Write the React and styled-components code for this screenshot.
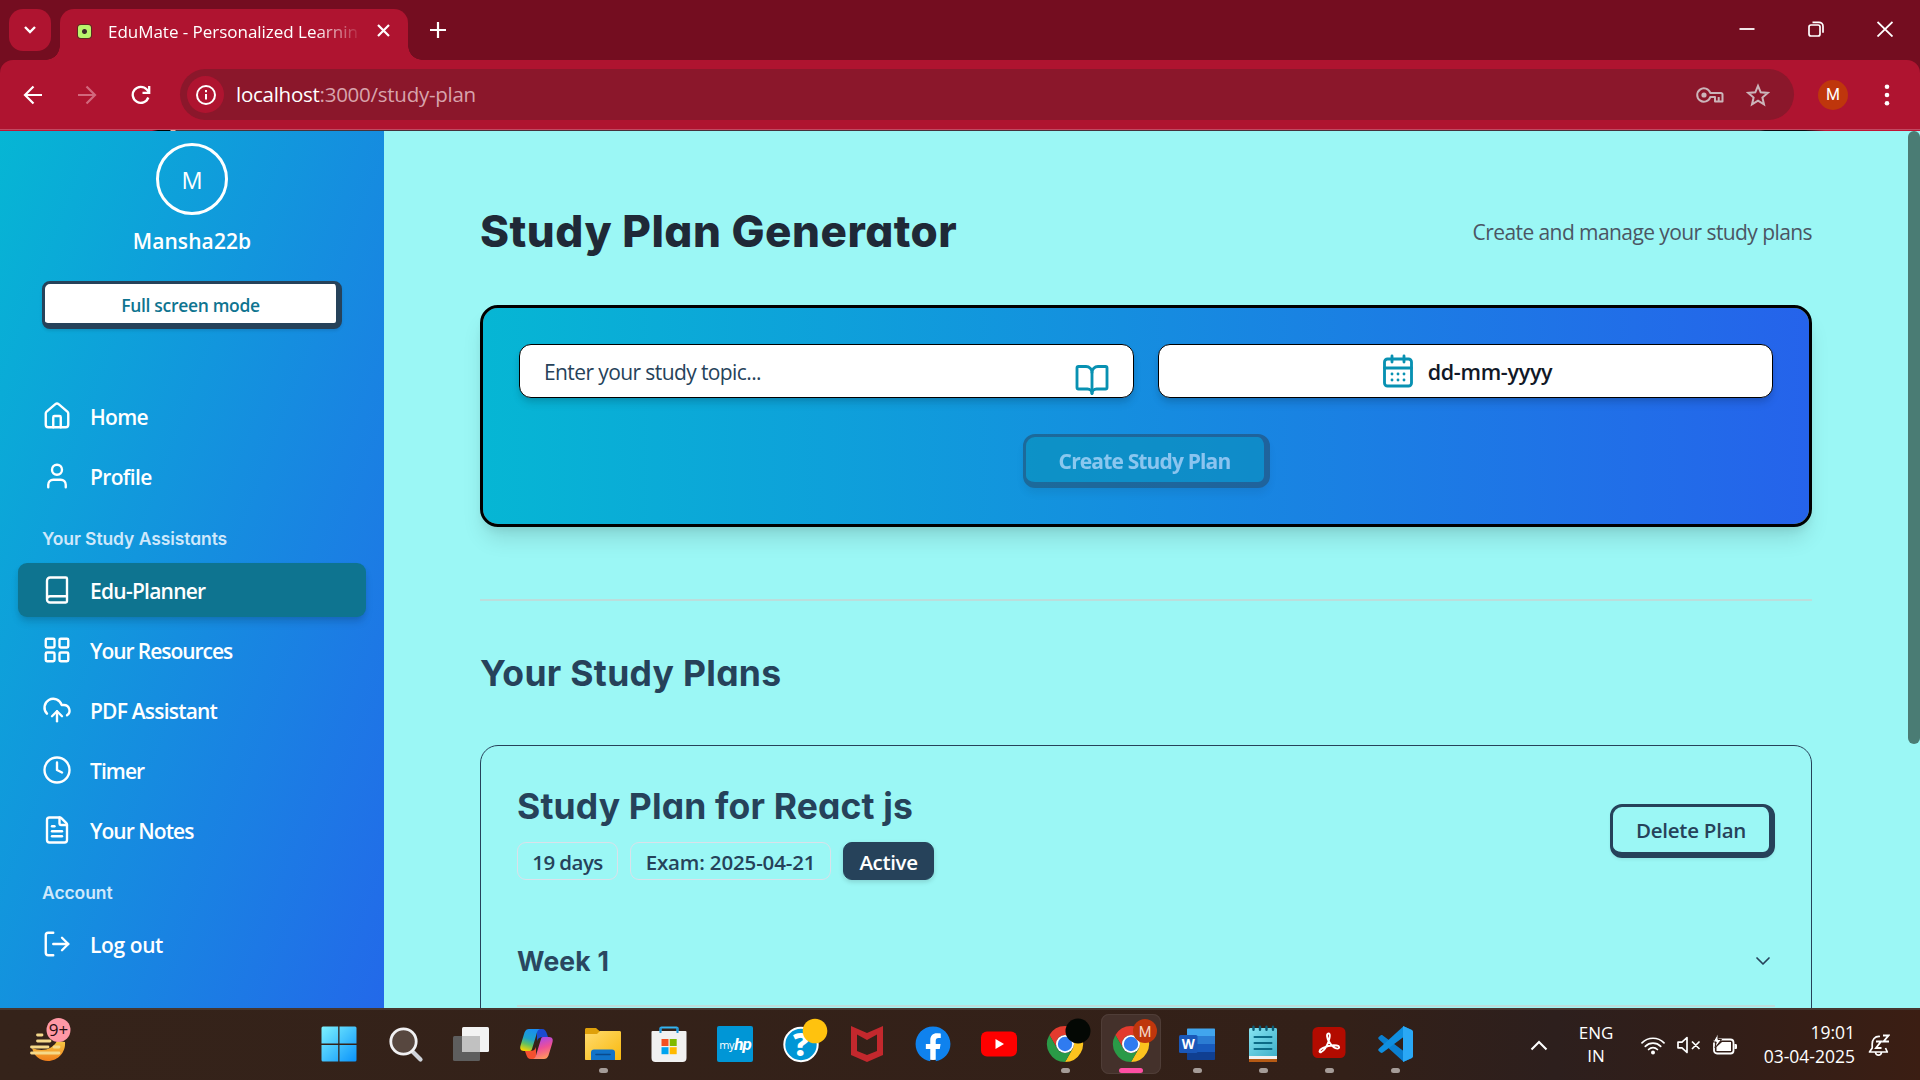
import React from "react";
import styled, { createGlobalStyle, css } from "styled-components";
import {
  House, User, Book, LayoutGrid, CloudUpload, Clock, FileText, LogOut,
  BookOpen, CalendarDays, ChevronDown,
} from "lucide-react";
import { FaFacebook } from "react-icons/fa";

const ui = `"Open Sans", "Noto Sans", sans-serif`;
const display = `Inter, "Open Sans", sans-serif`;
const navy = "#26425a";
const aqua = "#9bf7f5";

const GlobalStyle = createGlobalStyle`
  * { box-sizing: border-box; }
  body { margin: 0; font-family: ${ui}; background: ${aqua}; overflow: hidden; }
  svg { display: block; flex: none; }
  button { font-family: inherit; margin: 0; cursor: pointer; }
  h1, h2, h3, p { margin: 0; }
`;

const Screen = styled.div`
  width: 1920px;
  height: 1080px;
  display: grid;
  grid-template-rows: 60px 71px 877px 72px;
  overflow: hidden;
`;

/* ---------- Browser window ---------- */

const TabStrip = styled.header`
  display: flex;
  align-items: flex-start;
  padding: 9px 27px 0 9px;
  background: #740d20;
  color: #fff;
`;

const TabSearch = styled.button`
  width: 42px;
  height: 42px;
  display: grid;
  place-items: center;
  border: 0;
  border-radius: 14px;
  background: #af1430;
  padding: 0;
`;

const Tab = styled.div`
  position: relative;
  width: 348px;
  height: 51px;
  margin-left: 9px;
  padding: 0 18px 9px 17px;
  display: flex;
  align-items: center;
  border-radius: 14px 14px 0 0;
  background: #af1430;
  &::before, &::after {
    content: "";
    position: absolute;
    bottom: 0;
    width: 14px;
    height: 14px;
  }
  &::before {
    left: -14px;
    background: radial-gradient(circle at 0 0, transparent 13.5px, #af1430 14px);
  }
  &::after {
    right: -14px;
    background: radial-gradient(circle at 100% 0, transparent 13.5px, #af1430 14px);
  }
`;

const Favicon = styled.span`
  width: 13px;
  height: 13px;
  margin: 3px 17px 0 1px;
  border-radius: 3px;
  background: radial-gradient(circle, #3b2a2a 2px, #b9f56c 3px);
  box-shadow: 0 0 0 1px #5c2a20;
`;

const TabTitle = styled.span`
  width: 252px;
  padding-top: 3px;
  font-size: 17px;
  letter-spacing: -0.03px;
  white-space: nowrap;
  overflow: hidden;
  mask-image: linear-gradient(90deg, #000 82%, transparent 101%);
`;

const TabClose = styled.span`
  margin-left: auto;
`;

const NewTab = styled.span`
  margin: 12px 0 0 21px;
`;

const WindowControls = styled.div`
  display: flex;
  gap: 53px;
  margin: 12px 0 0 auto;
`;

const Toolbar = styled.div`
  position: relative;
  display: flex;
  align-items: center;
  padding: 0 26px 2px 23px;
  background: #af1430;
  border-radius: 13px 13px 0 0;
  &::after {
    content: "";
    position: absolute;
    inset: auto 0 0 0;
    height: 2px;
    background:
      linear-gradient(#c04a62, #c04a62) top / 100% 1px no-repeat,
      linear-gradient(90deg, #c01535 0 152px, #000 158px 170px, #f0b0a0 171px 175px, #45323c 176px 1760px, #0b0b12 1765px 1805px, #c01535 1825px) bottom / 100% 1px no-repeat;
  }
`;

const ChromeTop = styled.div`
  background: #740d20;
  display: grid;
`;

const NavButtons = styled.div`
  display: flex;
  gap: 34px;
`;

const AddressBar = styled.div`
  width: 1614px;
  height: 51px;
  margin-left: 29px;
  padding: 0 24px 0 7px;
  display: flex;
  align-items: center;
  border-radius: 26px;
  background: #8b172b;
`;

const SiteInfo = styled.span`
  width: 37px;
  height: 37px;
  display: grid;
  place-items: center;
  border-radius: 50%;
  background: #af1430;
`;

const Url = styled.span`
  margin: 0 0 2px 12px;
  font-size: 20.5px;
  letter-spacing: -0.26px;
  color: #d8a3ac;
  b { font-weight: 400; color: #fff; }
`;

const AddressActions = styled.span`
  display: flex;
  align-items: center;
  gap: 21px;
  margin-left: auto;
`;

const ProfileBadge = styled.span`
  width: 30px;
  height: 30px;
  margin-left: 24px;
  display: grid;
  place-items: center;
  border-radius: 50%;
  background: #bf360c;
  color: #fff;
  font: 400 16px/30px Roboto, sans-serif;
`;

const MenuDots = styled.span`
  margin-left: auto;
`;

/* ---------- Page ---------- */

const Page = styled.div`
  display: grid;
  grid-template-columns: 384px 1fr 12px;
  background: ${aqua};
  overflow: hidden;
`;

const Sidebar = styled.aside`
  display: flex;
  flex-direction: column;
  padding: 12px 18px 0;
  background: linear-gradient(to bottom right, #06b6d4, #2563eb);
  color: #fff;
`;

const Avatar = styled.div`
  width: 72px;
  height: 72px;
  align-self: center;
  display: grid;
  place-items: center;
  padding-top: 1px;
  border: 3px solid #fff;
  border-radius: 50%;
  font-size: 23.5px;
`;

const UserName = styled.p`
  margin-top: 12px;
  text-align: center;
  font-size: 21px;
  font-weight: 600;
  line-height: 28px;
  letter-spacing: 0.1px;
`;

const raised = css`
  border: 3px solid ${navy};
  border-right-width: 6px;
  border-bottom-width: 6px;
`;

const FullScreenButton = styled.button`
  ${raised}
  height: 48px;
  margin: 26px 24px 60px;
  padding: 2px 0 0;
  border-radius: 8px;
  background: #fff;
  color: #0e7490;
  font-size: 17.5px;
  font-weight: 600;
  letter-spacing: -0.32px;
  box-shadow: 0 2px 3px rgba(0, 0, 0, 0.1);
`;

const NavList = styled.nav`
  display: flex;
  flex-direction: column;
`;

const NavItem = styled.a`
  height: 54px;
  padding-left: 24px;
  display: flex;
  align-items: center;
  gap: 18px;
  border-radius: 9px;
  & + & { margin-top: 6px; }
  ${(p) => p.$active && css`
    background: #0e7490;
    box-shadow: 0 6px 9px -1px rgba(0, 0, 0, 0.12), 0 3px 6px -2px rgba(0, 0, 0, 0.1);
  `}
`;

const NavLabel = styled.span`
  padding-top: 2px;
  font-size: 21px;
  font-weight: 640;
  letter-spacing: ${(p) => p.$track}px;
  white-space: nowrap;
`;

const NavHeading = styled.h3`
  height: 60px;
  padding: 11px 0 0 24px;
  display: flex;
  align-items: center;
  font: 600 17.5px ${display};
  font-feature-settings: "cv11";
  letter-spacing: -0.08px;
  color: #cfe8fb;
`;

const Main = styled.main`
  padding: 70px 96px 0;
  min-width: 0;
`;

const Heading = styled.h1`
  font: 780 44px/60px ${display};
  font-feature-settings: "cv11";
  letter-spacing: 0.5px;
  color: #1f2937;
`;

const PageHeader = styled.div`
  display: flex;
  align-items: center;
  justify-content: space-between;
`;

const Tagline = styled.p`
  padding-top: 2px;
  font-size: 21px;
  letter-spacing: -0.58px;
  color: #4b5563;
`;

const Generator = styled.section`
  height: 222px;
  margin-top: 44px;
  padding: 36px;
  display: grid;
  grid-template-columns: 1fr 1fr;
  grid-template-rows: 54px 54px;
  gap: 36px 24px;
  border: 3px solid #000;
  border-radius: 18px;
  background: linear-gradient(to right, #06b6d4, #2563eb) padding-box;
  box-shadow: 0 15px 22px -4px rgba(0, 0, 0, 0.12), 0 6px 9px -3px rgba(0, 0, 0, 0.08);
`;

const Field = styled.div`
  display: flex;
  align-items: center;
  justify-content: ${(p) => (p.$centered ? "center" : "space-between")};
  gap: 12px;
  padding: 0 23px 0 24px;
  border: 1px solid #000;
  border-radius: 12px;
  background: #fff;
  color: #0891b2;
  box-shadow: 0 6px 9px -1px rgba(0, 0, 0, 0.12), 0 3px 6px -2px rgba(0, 0, 0, 0.1);
`;

const Placeholder = styled.span`
  padding-top: 2px;
  font-size: 21px;
  letter-spacing: -0.6px;
  color: ${navy};
`;

const DateText = styled.span`
  padding-top: 1px;
  font-size: 21.5px;
  font-weight: 570;
  letter-spacing: -0.3px;
  color: #111827;
`;

const BookSlot = styled.span`
  margin-top: 18px;
`;

const CreateButton = styled.button`
  ${raised}
  grid-column: 1 / -1;
  justify-self: center;
  width: 247px;
  padding: 2px 0 0;
  border-radius: 12px;
  background: #0891b2;
  color: #fff;
  font-size: 21px;
  font-weight: 680;
  letter-spacing: -0.85px;
  opacity: 0.5;
  box-shadow: 0 6px 9px -1px rgba(0, 0, 0, 0.14);
`;

const Rule = styled.div`
  height: 2px;
  margin: 72px 0 48px;
  background: #bcdedc;
`;

const SubHeading = styled.h2`
  padding-top: 2px;
  font: 700 35.5px/46px ${display};
  font-feature-settings: "cv11";
  letter-spacing: ${(p) => p.$track}px;
  color: ${navy};
`;

const PlanCard = styled.section`
  height: 400px;
  margin-top: 48px;
  padding: 36px;
  border: 1px solid ${navy};
  border-radius: 18px;
`;

const PlanHeader = styled.div`
  display: flex;
  align-items: center;
  justify-content: space-between;
`;

const Badges = styled.div`
  display: flex;
  gap: 12px;
  margin-top: 12px;
`;

const Badge = styled.span`
  width: ${(p) => p.$width}px;
  height: 38px;
  padding-top: 2px;
  display: grid;
  place-items: center;
  border: 1px solid #dbe1ea;
  border-radius: 9px;
  font-size: 20.5px;
  font-weight: 570;
  letter-spacing: ${(p) => p.$track}px;
  color: ${navy};
  white-space: nowrap;
  ${(p) => p.$solid && css`
    background: ${navy};
    border-color: ${navy};
    color: #fff;
    font-weight: 640;
    box-shadow: 0 2px 5px rgba(0, 0, 0, 0.15);
  `}
`;

const DeleteButton = styled.button`
  ${raised}
  width: 165px;
  height: 54px;
  padding: 1px 0 0;
  border-radius: 12px;
  background: transparent;
  color: ${navy};
  font-size: 20.5px;
  font-weight: 570;
  letter-spacing: -0.25px;
  box-shadow: 0 2px 3px rgba(0, 0, 0, 0.06);
`;

const WeekRow = styled.div`
  height: 91px;
  margin-top: 36px;
  display: flex;
  align-items: center;
  justify-content: space-between;
  border-bottom: 2px solid #bcdedc;
  color: ${navy};
`;

const WeekTitle = styled.h3`
  font: 660 26.5px ${display};
  font-feature-settings: "cv11";
  letter-spacing: 0.2px;
  color: #2a4760;
`;

const ScrollThumb = styled.div`
  height: 613px;
  border-radius: 6px;
  background: #4a7c74;
`;

/* ---------- Taskbar ---------- */

const Taskbar = styled.footer`
  display: grid;
  grid-template-columns: 306px auto 1fr;
  border-top: 2px solid #46362f;
  background: linear-gradient(90deg, #35231a, #332018 70%, #2d1f1d 81%, #321e18 90%, #3b1e13);
  color: #fff;
`;

const Widgets = styled.div`
  padding: 8px 0 0 30px;
`;

const Apps = styled.div`
  display: grid;
  grid-auto-flow: column;
  grid-auto-columns: 66px;
`;

const AppCell = styled.div`
  width: 60px;
  height: 60px;
  margin: 4px 0 0 3px;
  display: grid;
  justify-items: center;
  grid-template-rows: 54px 6px;
  border-radius: 8px;
  ${(p) => p.$current && css`
    background: #44312b;
    box-shadow: inset 0 0 0 1px #4f3d37;
  `}
`;

const AppIcon = styled.div`
  width: 36px;
  height: 36px;
  margin-top: 12px;
  svg { overflow: visible; }
`;

const RunMark = styled.i`
  width: ${(p) => (p.$current ? 24 : 9)}px;
  height: 5px;
  border-radius: 3px;
  background: ${(p) => (p.$current ? "#ff4fa3" : "#a59c98")};
`;

const MyHp = styled.div`
  width: 36px;
  height: 36px;
  padding-top: 2px;
  display: flex;
  align-items: center;
  justify-content: center;
  border-radius: 2px;
  background: #0096d6;
  font: 400 11px/34px ${ui};
  letter-spacing: -0.4px;
  em { font: italic 700 17px/30px Roboto, sans-serif; letter-spacing: -1px; margin-top: -3px; }
`;

const Tray = styled.div`
  display: flex;
  align-items: center;
  justify-content: flex-end;
  padding-right: 30px;
`;

const Language = styled.div`
  width: 40px;
  margin: -2px 25px 0 28px;
  text-align: center;
  font-size: 17px;
  line-height: 23px;
`;

const StatusIcons = styled.div`
  display: flex;
  align-items: center;
  gap: 12px;
`;

const DateTime = styled.div`
  width: 96px;
  margin: -2px 13px 0 21px;
  text-align: right;
  font-size: 17.5px;
  line-height: 24px;
  white-space: nowrap;
`;

/* ---------- Drawn icons ---------- */

const Stroke = ({ w, h = w, sw = 2, color = "#fff", children, box }) => (
  <svg width={w} height={h} viewBox={box || `0 0 ${w} ${h}`} fill="none" stroke={color} strokeWidth={sw}>
    {children}
  </svg>
);

const WeatherIcon = () => (
  <svg width="44" height="46" viewBox="0 0 44 46">
    <defs>
      <linearGradient id="moon" x1="0" y1="0" x2="0" y2="1">
        <stop offset="0" stopColor="#f6c945" /><stop offset="1" stopColor="#f07f1b" />
      </linearGradient>
    </defs>
    <path d="M35 24c1 10-7 19-17 19-8 0-14-5-16-13 10 4 20 2 25-7z" fill="url(#moon)" />
    <g stroke="#f5d98a" strokeWidth="2.8" strokeLinecap="round">
      <path d="M7.500 17H12M7.500 23H20M1.500 29H18M24 29h5M1.500 35H29" />
    </g>
    <circle cx="28.500" cy="12" r="12" fill="#ff98a5" />
    <text x="28.500" y="18" textAnchor="middle" fontSize="17" fill="#2a0d10" fontFamily={ui}>9+</text>
  </svg>
);

const WindowsIcon = () => (
  <svg width="36" height="36" viewBox="0 0 36 36">
    <defs>
      <linearGradient id="win" x1="0" y1="0" x2="1" y2="1">
        <stop offset="0" stopColor="#7df3ff" /><stop offset="1" stopColor="#0a93fb" />
      </linearGradient>
    </defs>
    <path fill="url(#win)" d="M2 .5h15.200v17H.5V2A1.500 1.500 0 0 1 2 .5zM18.500.5H34A1.500 1.500 0 0 1 35.500 2v15.500h-17zM.5 19h16.700v16.500H2A1.500 1.500 0 0 1 .5 34zM18.500 19h17v15a1.500 1.500 0 0 1-1.500 1.500H18.500z" />
  </svg>
);

const SearchIcon = () => (
  <svg width="36" height="36" viewBox="0 0 36 36">
    <path d="M25 25l8.500 8.500" stroke="#cfd3da" strokeWidth="4.200" strokeLinecap="round" />
    <circle cx="16.500" cy="15.500" r="12.700" fill="#57473f" stroke="#f1f1f3" strokeWidth="2.800" />
  </svg>
);

const TaskViewIcon = () => (
  <svg width="36" height="36" viewBox="0 0 36 36">
    <rect x="9" y="1" width="27" height="25" rx="1.500" fill="#f3f3f3" />
    <rect x="0" y="10" width="27" height="25" rx="1.500" fill="#5e5e5e" />
    <path d="M9 10h18v16H9z" fill="#c1c1c1" />
  </svg>
);

const CopilotIcon = () => (
  <svg width="36" height="36" viewBox="-1 -2 36 36">
    <defs>
      <linearGradient id="cpA" x1="0.600" y1="0" x2="0.300" y2="1">
        <stop offset="0" stopColor="#1a8df2" /><stop offset=".45" stopColor="#1ea3c9" />
        <stop offset=".7" stopColor="#5fc064" /><stop offset="1" stopColor="#f6d400" />
      </linearGradient>
      <linearGradient id="cpB" x1="0.600" y1="1" x2="0.300" y2="0">
        <stop offset="0" stopColor="#ff9a5a" /><stop offset=".5" stopColor="#ee5096" />
        <stop offset="1" stopColor="#a346f0" />
      </linearGradient>
    </defs>
    <path d="M17 1h5c3 0 4 2 5 5l1 3h-5c-3 0-5 1-6 4z" fill="#1b4bd0" />
    <path d="M9 1h11c-3 1-3 4-4 7l-4 13c-.6 2-1.500 2-3 2H4c-4 0-4.500-3-3-7L4.500 4.500C5.500 2 7 1 9 1z" fill="url(#cpA)" />
    <path d="M16 31h-5c-3 0-4-2-5-5l-1-3h5c3 0 5-1 6-4z" fill="#f4502f" />
    <path d="M24 31H13c3-1 3-4 4-7l4-13c.6-2 1.500-2 3-2h5c4 0 4.500 3 3 7l-3.500 11.500C27.500 30 26 31 24 31z" fill="url(#cpB)" />
  </svg>
);

const FolderIcon = () => (
  <svg width="36" height="36" viewBox="0 0 36 36">
    <defs>
      <linearGradient id="fld" x1="0" y1="0" x2="1" y2="1">
        <stop offset="0" stopColor="#ffdb6e" /><stop offset="1" stopColor="#f9b90e" />
      </linearGradient>
    </defs>
    <path d="M0 3.500C0 2.500.8 2 1.500 2H11l4 3.500V10H0z" fill="#dfa00a" />
    <path d="M0 8h12l3-3h19.500c1 0 1.500.6 1.500 1.500V33c0 .6-.4 1-1 1H1c-.6 0-1-.4-1-1z" fill="url(#fld)" />
    <path d="M6 34v-7.500A3 3 0 0 1 9 23.500h18a3 3 0 0 1 3 3V34z" fill="#1173c8" />
    <path d="M11 28.500h14" stroke="#0a4a8c" strokeWidth="1.600" strokeLinecap="round" />
  </svg>
);

const StoreIcon = () => (
  <svg width="36" height="36" viewBox="0 0 36 36">
    <path d="M9.500 7V2.500a1 1 0 0 1 1-1h15a1 1 0 0 1 1 1V7" fill="none" stroke="#35b5f1" strokeWidth="2" />
    <path d="M.5 6a1 1 0 0 1 1-1h33a1 1 0 0 1 1 1v26a4 4 0 0 1-4 4h-27a4 4 0 0 1-4-4z" fill="#f1f1f1" />
    <path d="M9.500 1.500v5.500M26.500 1.500v5.500" stroke="#1f95d8" strokeWidth="2" />
    <path d="M10.500 13h7v7h-7z" fill="#f25022" /><path d="M18.700 13h7v7h-7z" fill="#7fba00" />
    <path d="M10.500 21.200h7v7h-7z" fill="#00a4ef" /><path d="M18.700 21.200h7v7h-7z" fill="#ffb900" />
  </svg>
);

const HelpIcon = () => (
  <svg width="36" height="36" viewBox="0 0 36 36">
    <circle cx="18" cy="18.500" r="16.700" fill="#0096d6" stroke="#fff" strokeWidth="2" />
    <text x="18" y="30" textAnchor="middle" fontSize="32" fontWeight="800" fill="#fff" fontFamily={ui}>?</text>
    <circle cx="32" cy="5" r="12.300" fill="#ffc20e" />
  </svg>
);

const ShieldIcon = () => (
  <svg width="36" height="36" viewBox="0 0 36 36">
    <path fillRule="evenodd" fill="#c3282d" d="M2 0l16 7 16-7v29l-16 7-16-7zM8 8.500v16.500l10 4 10-4V8.500l-10 5.500z" />
  </svg>
);

const FacebookIcon = () => (
  <svg width="36" height="36" viewBox="0 0 36 36">
    <circle cx="18" cy="18" r="16" fill="#fff" />
    <FaFacebook size={36} color="#0f82ee" />
  </svg>
);

const YouTubeIcon = () => (
  <svg width="36" height="36" viewBox="0 0 36 36">
    <rect y="5.500" width="36" height="25" rx="6" fill="#f00" />
    <path d="M14.500 13l8.500 5-8.500 5z" fill="#fff" />
  </svg>
);

const ChromeIcon = ({ children }) => (
  <svg width="36" height="36" viewBox="0 0 36 36">
    <path d="M2.410 9A18 18 0 0 1 33.590 9H18A9 9 0 0 0 10.200 22.500Z" fill="#e33b2e" />
    <path d="M33.590 9A18 18 0 0 1 18 36L25.800 22.500A9 9 0 0 0 18 9Z" fill="#fcc31e" />
    <path d="M18 36A18 18 0 0 1 2.410 9L10.200 22.500A9 9 0 0 0 25.800 22.500Z" fill="#2a9a47" />
    <circle cx="18" cy="18" r="9" fill="#fff" />
    <circle cx="18" cy="18" r="7.200" fill="#2f7bf0" />
    {children}
  </svg>
);

const WordIcon = () => (
  <svg width="36" height="36" viewBox="0 0 36 36">
    <path d="M9 2.500h26c.6 0 1 .4 1 1V10H8V3.500c0-.6.4-1 1-1z" fill="#41a5ee" />
    <path d="M8 10h28v8H8z" fill="#2b7cd3" />
    <path d="M8 18h28v8H8z" fill="#185abd" />
    <path d="M8 26h28v7c0 .6-.4 1-1 1H9c-.6 0-1-.4-1-1z" fill="#103f91" />
    <rect x="0" y="9" width="18.500" height="18" rx="1.500" fill="#1a57b8" />
    <text x="9.200" y="23" textAnchor="middle" fontSize="13.500" fontWeight="700" fill="#fff" fontFamily={ui}>W</text>
  </svg>
);

const NotepadIcon = () => (
  <svg width="36" height="36" viewBox="0 0 36 36">
    <defs>
      <linearGradient id="np" x1="0" y1="0" x2="1" y2="1">
        <stop offset="0" stopColor="#86e4f2" /><stop offset="1" stopColor="#3fb0ca" />
      </linearGradient>
    </defs>
    <path d="M4 30h28v6H4z" fill="#b65a14" /><path d="M4 29h28v4H4z" fill="#f2f2f2" />
    <path d="M4 3.500C4 2.700 4.500 2 5.500 2h25c1 0 1.500.7 1.500 1.500V30H4z" fill="url(#np)" />
    <path d="M9.500 11h17M9.500 17h17M9.500 23h17" stroke="#0b6a86" strokeWidth="2" strokeLinecap="round" />
    <path d="M8.500.8v3M15 .8v3M21.500.8v3M28 .8v3" stroke="#0b5d77" strokeWidth="2.400" strokeLinecap="round" />
  </svg>
);

const AcrobatIcon = () => (
  <svg width="36" height="36" viewBox="0 0 36 36">
    <rect x="1.500" y="1" width="33" height="31" rx="5.500" fill="#b30b00" />
    <path d="M17.500 7.500c-2.600.2-1.300 5.200.6 8.300 2 3.300 5.500 6.700 8.400 6.800 2.300 0 2.300-2.700-.7-3.100-4.300-.6-9.700.3-14.200 2.600-4.300 2.200-3.500 4.800-1.300 3.900 2.600-1.200 5.600-5.700 7.500-11.200.9-2.900 1.800-7.300-.3-7.300z" fill="none" stroke="#fff" strokeWidth="1.900" strokeLinejoin="round" />
  </svg>
);

const VsCodeIcon = () => (
  <svg width="36" height="36" viewBox="0 0 36 36">
    <path d="M26.500.300L35 4v28l-8.500 3.800L2 13.500c-1-1-1-1.700-.2-2.500l1.700-1.600c.8-.6 1.500-.6 2.300 0L26.500 25z" fill="#0a7fd0" />
    <path d="M26.500.300L2 22.500c-1 1-1 1.700-.2 2.500l1.700 1.600c.8.600 1.500.6 2.300 0L26.500 11z" fill="#0f8fe0" />
    <path d="M26 0l8.800 4c.8.400 1.200.9 1.200 1.800v24.400c0 .9-.4 1.400-1.200 1.800L26 36z" fill="#2aa8f5" />
  </svg>
);

const WifiIcon = () => (
  <svg width="24" height="19" viewBox="0 0 24 19" fill="none" stroke="#fff" strokeWidth="1.700" strokeLinecap="round">
    <path d="M1 6.800a15.600 15.600 0 0 1 22 0M4.300 10.300a11 11 0 0 1 15.400 0M7.600 13.500a6.300 6.300 0 0 1 8.800 0" />
    <circle cx="12" cy="16.500" r="2" fill="#fff" stroke="none" />
  </svg>
);

const MuteIcon = () => (
  <Stroke w={24} h={20} sw={1.700}>
    <path d="M1 7.200v5.600h4l5 4.700V2.500L5 7.200zM15 6.500l7.500 7.500M22.500 6.500L15 14" strokeLinejoin="round" />
  </Stroke>
);

const BatteryIcon = () => (
  <svg width="25" height="22" viewBox="0 0 25 22">
    <rect x="1" y="5.500" width="19.500" height="14" rx="3" fill="none" stroke="#fff" strokeWidth="1.800" />
    <path d="M9 8h9v9H3.500v-4z" fill="#fff" />
    <path d="M21.500 10h1.200c.8 0 1.300.6 1.300 1.300v2.400c0 .7-.5 1.300-1.300 1.300h-1.200z" fill="#fff" />
    <path d="M5-.500L0 8h3.200L2 14l6.500-8.500H5z" fill="#fff" stroke="#321e18" strokeWidth="1" />
  </svg>
);

const BellIcon = () => (
  <Stroke w={22} h={24} sw={1.700}>
    <path d="M12 3.500C6.500 3 4.200 7 4.200 11v4L1.500 19h17.800l-1.800-4M7.500 19.500c.5 3.500 5.500 3.500 6 0" strokeLinejoin="round" />
    <path d="M8 8.500h5l-5 6.500h5.500M15 2.500h5.500l-5 6h5.500" strokeWidth="1.900" />
  </Stroke>
);

/* ---------- Data ---------- */

const primaryNav = [
  { icon: House, label: "Home", track: -0.7 },
  { icon: User, label: "Profile", track: -0.65 },
];
const assistantNav = [
  { icon: Book, label: "Edu-Planner", track: -0.75, active: true },
  { icon: LayoutGrid, label: "Your Resources", track: -1.05 },
  { icon: CloudUpload, label: "PDF Assistant", track: -0.8 },
  { icon: Clock, label: "Timer", track: -0.95 },
  { icon: FileText, label: "Your Notes", track: -0.95 },
];
const accountNav = [{ icon: LogOut, label: "Log out", track: -0.4 }];

const chromeBadge = (
  <>
    <circle cx="32" cy="5" r="12" fill="#bf360c" />
    <text x="32" y="10.500" textAnchor="middle" fontSize="14.500" fill="#f3d6c8" fontFamily="Roboto, sans-serif">M</text>
  </>
);

const apps = [
  { icon: <WindowsIcon /> },
  { icon: <SearchIcon /> },
  { icon: <TaskViewIcon /> },
  { icon: <CopilotIcon /> },
  { icon: <FolderIcon />, running: true },
  { icon: <StoreIcon /> },
  { icon: <MyHp><span>my</span><em>hp</em></MyHp> },
  { icon: <HelpIcon /> },
  { icon: <ShieldIcon /> },
  { icon: <FacebookIcon /> },
  { icon: <YouTubeIcon /> },
  { icon: <ChromeIcon><circle cx="31" cy="5" r="12.500" fill="#040804" /></ChromeIcon>, running: true },
  { icon: <ChromeIcon>{chromeBadge}</ChromeIcon>, running: true, current: true },
  { icon: <WordIcon />, running: true },
  { icon: <NotepadIcon />, running: true },
  { icon: <AcrobatIcon />, running: true },
  { icon: <VsCodeIcon />, running: true },
];

const renderNav = (items) =>
  items.map(({ icon: Icon, label, track, active }) => (
    <NavItem key={label} $active={active}>
      <Icon size={30} strokeWidth={1.900} />
      <NavLabel $track={track}>{label}</NavLabel>
    </NavItem>
  ));

export default function App() {
  return (
    <Screen>
      <GlobalStyle />
      <TabStrip>
        <TabSearch>
          <Stroke w={14} h={10} sw={2.400}><path d="M2 2l5 5 5-5" /></Stroke>
        </TabSearch>
        <Tab>
          <Favicon />
          <TabTitle>EduMate - Personalized Learnin</TabTitle>
          <TabClose>
            <Stroke w={13} sw={2.200}><path d="M1 1l11 11M12 1L1 12" /></Stroke>
          </TabClose>
        </Tab>
        <NewTab>
          <Stroke w={18} sw={2.200}><path d="M9 1v16M1 9h16" /></Stroke>
        </NewTab>
        <WindowControls>
          <Stroke w={16} sw={1.800}><path d="M.5 8h15" /></Stroke>
          <Stroke w={16} sw={1.700}>
            <rect x="1" y="4" width="11" height="11" rx="2" />
            <path d="M4.500 1.300H11a4 4 0 0 1 4 4v6.500" />
          </Stroke>
          <Stroke w={16} sw={1.800}><path d="M.5 1l15 14.500M15.500 1L.5 15.500" /></Stroke>
        </WindowControls>
      </TabStrip>

      <ChromeTop>
        <Toolbar>
          <NavButtons>
            <Stroke w={20} sw={2.200}><path d="M19 10H2.500M10.500 1.500L2 10l8.500 8.500" /></Stroke>
            <Stroke w={20} sw={2.200} color="#d2687d"><path d="M1 10h16.500M9.500 1.500L18 10l-8.500 8.500" /></Stroke>
            <Stroke w={20} sw={2.300}>
              <path d="M17.300 12.500A8 8 0 1 1 15.800 4.600L18 7.200" />
              <path d="M18.200 1v6.800H11.500" />
            </Stroke>
          </NavButtons>
          <AddressBar>
            <SiteInfo>
              <Stroke w={22} sw={2}>
                <circle cx="11" cy="11" r="9" /><path d="M11 10v5.500M11 6v2.200" />
              </Stroke>
            </SiteInfo>
            <Url><b>localhost</b>:3000/study-plan</Url>
            <AddressActions>
              <Stroke w={29} h={18} sw={2} color="#ccb5ba">
                <path d="M14.300 7A6.700 6.700 0 1 0 14.300 11H19v4.500h7.500V8.500a1.500 1.500 0 0 0-1.500-1.500zM22.700 11v4.500" strokeLinejoin="round" />
                <circle cx="8" cy="9" r="2.600" fill="#ccb5ba" stroke="none" />
              </Stroke>
              <Stroke w={24} sw={2} color="#ccb5ba">
                <path d="M12 2.800l2.700 6.500 7 .6-5.300 4.600 1.600 6.900-6-3.700-6 3.700 1.600-6.900L2.300 9.900l7-.6z" />
              </Stroke>
            </AddressActions>
          </AddressBar>
          <ProfileBadge>M</ProfileBadge>
          <MenuDots>
            <svg width="14" height="22" fill="#fff">
              <circle cx="7" cy="2.700" r="2.300" /><circle cx="7" cy="11" r="2.300" /><circle cx="7" cy="19.300" r="2.300" />
            </svg>
          </MenuDots>
        </Toolbar>
      </ChromeTop>

      <Page>
        <Sidebar>
          <Avatar>M</Avatar>
          <UserName>Mansha22b</UserName>
          <FullScreenButton>Full screen mode</FullScreenButton>
          <NavList>
            {renderNav(primaryNav)}
            <NavHeading>Your Study Assistants</NavHeading>
            {renderNav(assistantNav)}
            <NavHeading>Account</NavHeading>
            {renderNav(accountNav)}
          </NavList>
        </Sidebar>

        <Main>
          <PageHeader>
            <Heading>Study Plan Generator</Heading>
            <Tagline>Create and manage your study plans</Tagline>
          </PageHeader>

          <Generator>
            <Field>
              <Placeholder>Enter your study topic...</Placeholder>
              <BookSlot><BookOpen size={36} strokeWidth={1.900} /></BookSlot>
            </Field>
            <Field $centered>
              <CalendarDays size={36} strokeWidth={1.900} />
              <DateText>dd-mm-yyyy</DateText>
            </Field>
            <CreateButton>Create Study Plan</CreateButton>
          </Generator>

          <Rule />

          <SubHeading $track={0.3}>Your Study Plans</SubHeading>
          <PlanCard>
            <PlanHeader>
              <div>
                <SubHeading $track={0.15}>Study Plan for React js</SubHeading>
                <Badges>
                  <Badge $width={101} $track={-0.55}>19 days</Badge>
                  <Badge $width={201} $track={-0.15}>Exam: 2025-04-21</Badge>
                  <Badge $width={91} $track={-0.35} $solid>Active</Badge>
                </Badges>
              </div>
              <DeleteButton>Delete Plan</DeleteButton>
            </PlanHeader>
            <WeekRow>
              <WeekTitle>Week 1</WeekTitle>
              <ChevronDown size={24} strokeWidth={1.700} />
            </WeekRow>
          </PlanCard>
        </Main>

        <ScrollThumb />
      </Page>

      <Taskbar>
        <Widgets><WeatherIcon /></Widgets>
        <Apps>
          {apps.map(({ icon, running, current }, i) => (
            <AppCell key={i} $current={current}>
              <AppIcon>{icon}</AppIcon>
              {running && <RunMark $current={current} />}
            </AppCell>
          ))}
        </Apps>
        <Tray>
          <Stroke w={18} h={11} sw={2.100}><path d="M1.500 9.500L9 2l7.500 7.500" /></Stroke>
          <Language>ENG<br />IN</Language>
          <StatusIcons>
            <WifiIcon />
            <MuteIcon />
            <BatteryIcon />
          </StatusIcons>
          <DateTime>19:01<br />03-04-2025</DateTime>
          <BellIcon />
        </Tray>
      </Taskbar>
    </Screen>
  );
}
